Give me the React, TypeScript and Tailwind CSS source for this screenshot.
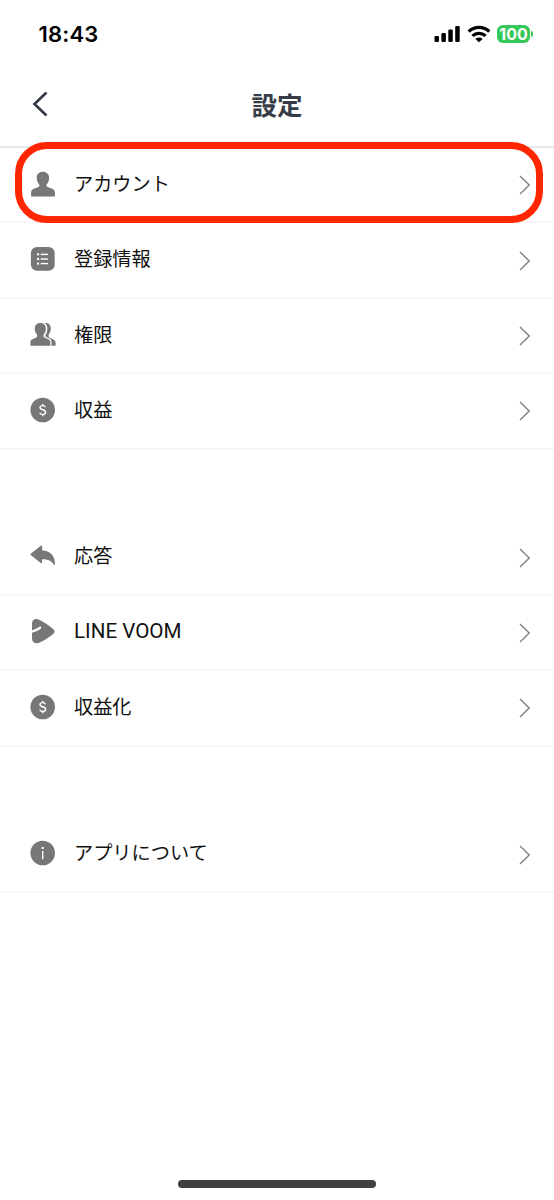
import React from "react";

interface SettingItem {
  label: string;
  icon: React.ReactNode;
  latin?: boolean;
  highlighted?: boolean;
}

const iconClass = "w-[26px] h-[26px] shrink-0 text-[#777777]";

const UserIcon = () => (
  <svg viewBox="0 0 26 26" fill="currentColor" className={iconClass}>
    <path d="M12.800.8c3.800 0 6.300 2.400 6.300 6.100 0 2.900-1 5.200-2.500 6.500v1.300c0 .6.3 1 .9 1.200l4.800 1.800c1.700.7 2.600 2 2.600 3.700v4.200H1.100v-4.200c0-1.700.9-3 2.600-3.700l4.700-1.800c.6-.2.900-.6.9-1.200v-1.300C7.700 12.100 6.700 9.800 6.700 6.900 6.700 3.200 9.100.8 12.800.8Z" />
  </svg>
);

const ListIcon = () => (
  <svg viewBox="0 0 26 26" fill="currentColor" className={iconClass}>
    <rect x="0.900" y="1" width="23.800" height="23.800" rx="6" />
    <g fill="#fff">
      <rect x="7" y="7.300" width="2.100" height="2.100" />
      <rect x="7" y="12" width="2.100" height="2.100" />
      <rect x="7" y="16.600" width="2.100" height="2.100" />
      <rect x="10.700" y="7.700" width="7.300" height="1.400" />
      <rect x="10.700" y="12.300" width="7.300" height="1.400" />
      <rect x="10.700" y="16.900" width="7.300" height="1.400" />
    </g>
  </svg>
);

const UsersIcon = () => (
  <svg viewBox="0 0 26 26" fill="currentColor" className={iconClass}>
    <path d="M10.300 1.900c3.500 0 5.500 2.200 5.500 5.500 0 2.800-.9 4.900-2.300 6.200v1.500c0 .6.2 1 .8 1.300l4 1.800c1.400.6 2 1.700 2 3.200v3.300H.4v-3.300c0-1.500.6-2.600 1.900-3.200l4-1.800c.6-.3.8-.7.8-1.300v-1.500C5.700 12.300 4.800 10.200 4.800 7.400c0-3.300 2.100-5.500 5.500-5.500Z" />
    <path d="M14.600 2.100c3.800-.6 6.200 1.600 6.200 5.200 0 2.800-.8 4.900-2.200 6.300v1.600c0 .5.3.9.8 1.200l3.900 2c1.600.8 2.300 1.700 2.300 3.300v3h-4.100v-3.200c0-2-.8-3.500-2.400-4.200l-3-1.400c-.6-.3-.8-.6-.8-1.100 0-.3.100-.6.300-.9 1.100-1.600 1.800-3.700 1.800-6.300 0-2.300-1-4.300-2.800-5.500Z" />
  </svg>
);

const DollarIcon = () => (
  <svg viewBox="0 0 26 26" className={iconClass}>
    <circle cx="12.700" cy="13" r="12.300" fill="currentColor" />
    <path
      d="M15.400 10.300c-.4-1.100-1.300-1.700-2.700-1.700-1.600 0-2.700.8-2.700 2 0 1.300 1.100 1.800 2.700 2.200 1.700.4 2.900 1 2.900 2.500 0 1.400-1.200 2.200-2.900 2.200-1.500 0-2.600-.7-3-1.900M12.700 7v1.700M12.700 17.400v1.800"
      fill="none"
      stroke="#fff"
      strokeWidth="1.400"
    />
  </svg>
);

const ReplyIcon = () => (
  <svg viewBox="0 0 26 26" fill="currentColor" className={iconClass}>
    <path d="m1 10.500 9.500-7.600c.8-.6 1.600-.3 1.600.6v3.700c8.100.4 12.900 5.700 12.900 13.800 0 1.200-.5 1.500-1.100.6-2.200-3.700-6-5.400-11.800-5.400v3c0 .9-.8 1.200-1.600.6L1 12.300c-.7-.6-.7-1.200 0-1.800Z" />
  </svg>
);

const VoomIcon = () => (
  <svg viewBox="0 0 26 26" fill="currentColor" className={iconClass}>
    <path d="M2 12.200V5.700C2 2 5.200.2 8.200 1.500c5.400 2.300 10 5.300 14.700 9.200 2.200 1.800 2.200 3.800 0 5.600-4.500 3.700-9.200 6.500-14.300 8.600C5.300 26.200 2 24.300 2 20.800v-6c2.800-.8 5.700-2.100 8.400-3.800.8-.5 1.100-1.100.7-1.800-.4-.7-1.100-.8-1.900-.3C6.800 10.400 4.500 11.500 2 12.200Z" />
  </svg>
);

const InfoIcon = () => (
  <svg viewBox="0 0 26 26" className={iconClass}>
    <circle cx="12.700" cy="13" r="12.300" fill="currentColor" />
    <rect x="11.700" y="6.900" width="2" height="2.100" fill="#fff" />
    <rect x="12" y="11" width="1.400" height="8.200" fill="#fff" />
  </svg>
);

const sections: SettingItem[][] = [
  [
    { label: "アカウント", icon: <UserIcon />, highlighted: true },
    { label: "登録情報", icon: <ListIcon /> },
    { label: "権限", icon: <UsersIcon /> },
    { label: "収益", icon: <DollarIcon /> },
  ],
  [
    { label: "応答", icon: <ReplyIcon /> },
    { label: "LINE VOOM", icon: <VoomIcon />, latin: true },
    { label: "収益化", icon: <DollarIcon /> },
  ],
  [{ label: "アプリについて", icon: <InfoIcon /> }],
];

function StatusBar() {
  return (
    <div className="flex h-[68px] items-center justify-between pr-[21px] pl-[38.5px]">
      <span className="font-['Inter',sans-serif] text-[22px] leading-none font-semibold tracking-[0.2px] text-black">
        18:43
      </span>
      <div className="flex items-center">
        <svg viewBox="0 0 27 18" className="h-[18px] w-[27px]">
          <rect x="0.500" y="11" width="4.500" height="6" rx="1.300" />
          <rect x="7.400" y="8" width="4.500" height="9" rx="1.300" />
          <rect x="14.300" y="4.500" width="4.500" height="12.500" rx="1.300" />
          <rect x="21.200" y="1" width="4.500" height="16" rx="1.300" />
        </svg>
        <svg viewBox="0 0 24 18" className="ml-[6px] h-[18px] w-[24px]">
          <g fill="none" stroke="#000" strokeWidth="3.300">
            <path d="M1.700 6.600a14.800 14.800 0 0 1 20.600 0" />
            <path d="M5.500 10.900a9.400 9.400 0 0 1 13 0" />
          </g>
          <path d="M12 17.200 8.400 13.900a5.200 5.200 0 0 1 7.200 0Z" />
        </svg>
        <div className="ml-[6px] flex h-[18px] w-[33px] items-center justify-center rounded-[6px] bg-[#34c759] font-['Inter',sans-serif] text-[16px] leading-none font-bold text-white">
          100
        </div>
        <div className="ml-px h-[6px] w-[2px] rounded-r-full bg-[#34c759]" />
      </div>
    </div>
  );
}

function Header() {
  return (
    <header className="grid h-[80px] grid-cols-[1fr_auto_1fr] items-center border-b-2 border-[#e5e8ed] pb-[6px]">
      <button className="ml-[31px] w-[18px]" aria-label="戻る">
        <svg viewBox="0 0 18 26" className="h-[26px] w-[18px]">
          <path d="M15.500 1.500 3.500 13 15.500 24.500" fill="none" stroke="#363d49" strokeWidth="2.700" />
        </svg>
      </button>
      <h1 className="text-[25.5px] leading-none font-bold text-[#363d49]">設定</h1>
    </header>
  );
}

function SettingRow({ label, icon, latin, highlighted }: SettingItem) {
  return (
    <li className="relative flex h-[75.4px] items-center border-b-2 border-[#f6f6f6] pr-[23px] pb-[2px] pl-[30px]">
      {icon}
      <span
        className={
          latin
            ? "ml-[18px] flex-1 font-['Roboto',sans-serif] text-[20.6px] leading-none text-[#111111]"
            : "ml-[18px] flex-1 text-[19.2px] leading-none text-[#111111]"
        }
      >
        {label}
      </span>
      <svg viewBox="0 0 12 20" className="mt-[3px] h-[20px] w-[12px]">
        <path d="M1 1 10.200 10 1 19" fill="none" stroke="#858585" strokeWidth="1.500" />
      </svg>
      {highlighted && (
        <div className="pointer-events-none absolute -top-[6px] right-[11px] left-[15px] h-[81px] rounded-[32px] border-[7px] border-[#ff2600]" />
      )}
    </li>
  );
}

export default function App() {
  return (
    <div className="flex h-[1200px] w-[554px] flex-col overflow-hidden bg-white font-['Noto_Sans_CJK_JP',sans-serif]">
      <StatusBar />
      <Header />
      <main className="flex flex-1 flex-col gap-[70.8px]">
        {sections.map((items, index) => (
          <ul key={index}>
            {items.map((item) => (
              <SettingRow key={item.label} {...item} />
            ))}
          </ul>
        ))}
      </main>
      <div className="mb-[12px] h-[8px] w-[198px] self-center rounded-full bg-[#404040]" />
    </div>
  );
}
